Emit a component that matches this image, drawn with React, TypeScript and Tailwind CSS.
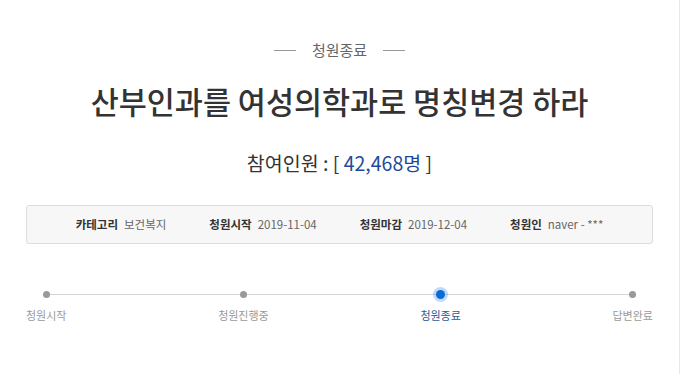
const font = { fontFamily: '"Noto Sans CJK KR", "Noto Sans", sans-serif' };

const infoItems = [
  { label: "카테고리", value: "보건복지" },
  { label: "청원시작", value: "2019-11-04" },
  { label: "청원마감", value: "2019-12-04" },
  { label: "청원인", value: "naver - ***" },
];

const steps = [
  { label: "청원시작", active: false },
  { label: "청원진행중", active: false },
  { label: "청원종료", active: true },
  { label: "답변완료", active: false },
];

export default function App() {
  return (
    <div className="h-[374px] w-[680px] border-r border-[#e8e8e8] bg-white" style={font}>
      <div className="flex flex-col items-center pt-[39px]">
        <div className="flex items-center gap-[16px]">
          <span className="h-px w-[22px] bg-[#999]" />
          <span className="text-[15px] leading-[22px] text-[#666]">청원종료</span>
          <span className="h-px w-[22px] bg-[#999]" />
        </div>

        <h1 className="mt-[18px] text-[30.5px] leading-[44px] font-medium text-[#333]">
          산부인과를 여성의학과로 명칭변경 하라
        </h1>

        <p className="mt-[26px] text-[19.5px] leading-[28px] text-[#333]">
          참여인원 : [ <span className="text-[#1d4b9c]">42,468명</span> ]
        </p>
      </div>

      <div className="mx-[26px] mt-[28px] flex h-[39px] items-center justify-center gap-[43px] rounded-[3px] border border-[#dcdcdc] bg-[#f7f7f7]">
        {infoItems.map((item) => (
          <div key={item.label} className="flex items-center gap-[6px] text-[11.5px]">
            <span className="font-bold text-[#333]">{item.label}</span>
            <span className="text-[#666]">{item.value}</span>
          </div>
        ))}
      </div>

      <div className="relative mx-[26px] mt-[44px]">
        <div className="absolute left-[20px] right-[22px] top-[6px] h-px bg-[#d4d4d4]" />
        <div className="relative flex justify-between">
          {steps.map((step) => (
            <div key={step.label} className="flex flex-col items-center">
              <div className="flex h-[13px] w-[13px] items-center justify-center">
                {step.active ? (
                  <span className="h-[9px] w-[9px] rounded-full bg-[#0b6ad6] shadow-[0_0_0_3px_rgba(80,150,240,0.35)]" />
                ) : (
                  <span className="h-[7px] w-[7px] rounded-full bg-[#999]" />
                )}
              </div>
              <span
                className={`mt-[6px] text-[11px] leading-[16px] ${step.active ? "text-[#2a5a9e]" : "text-[#9a9a9a]"}`}
              >
                {step.label}
              </span>
            </div>
          ))}
        </div>
      </div>
    </div>
  );
}
